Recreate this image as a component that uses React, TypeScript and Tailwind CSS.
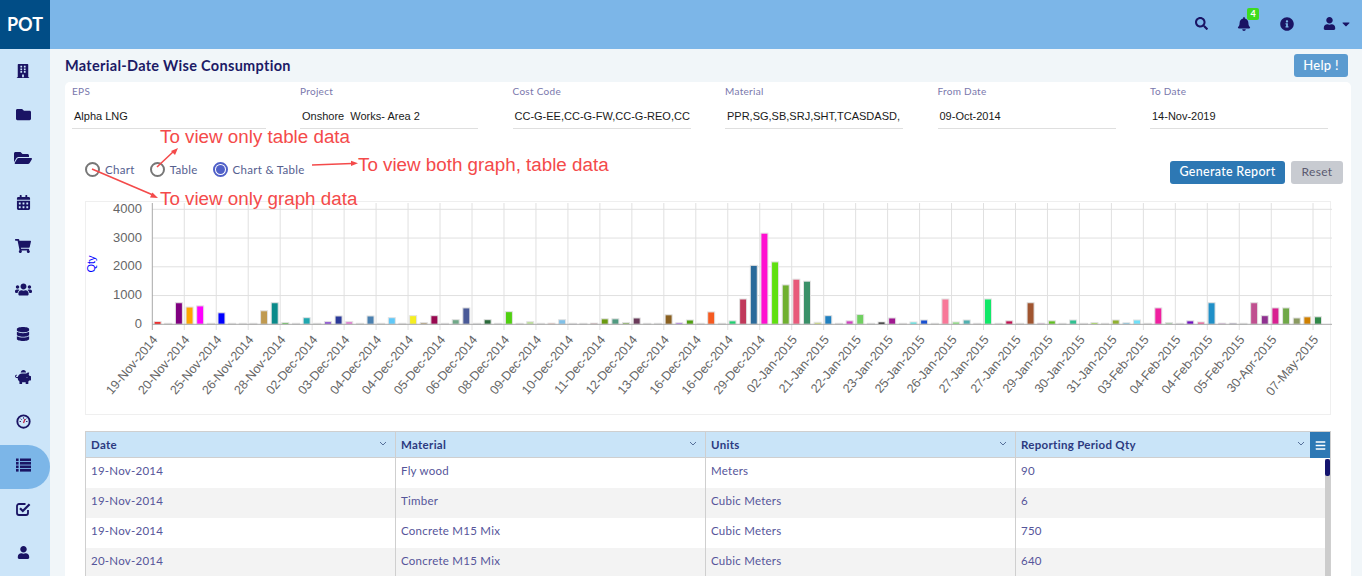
import React from 'react';
import {
  FaBuilding,
  FaFolder,
  FaFolderOpen,
  FaCalendarAlt,
  FaShoppingCart,
  FaUsers,
  FaDatabase,
  FaPiggyBank,
  FaUser,
  FaSearch,
  FaBell,
  FaInfoCircle,
  FaCaretDown,
  FaBars,
} from 'react-icons/fa';

const GaugeIcon = () => (
  <svg width="15" height="15" viewBox="0 0 16 16">
    <circle cx="8" cy="8" r="6.6" fill="none" stroke="#1a1464" strokeWidth="2" />
    <path d="M8 3.5v1.5M3.8 8h1.5M10.7 8h1.5M5 5l1 1M11 5l-1 1" stroke="#1a1464" strokeWidth="1" />
    <path d="M8 9.5L9.6 5.4" stroke="#c02040" strokeWidth="1.4" />
  </svg>
);

const ListIcon = () => (
  <svg width="15" height="14" viewBox="0 0 15 14" fill="#1a1464">
    <rect x="0" y="0.5" width="2.6" height="2.6" />
    <rect x="4" y="0.5" width="11" height="2.6" />
    <rect x="0" y="4" width="2.6" height="2.6" />
    <rect x="4" y="4" width="11" height="2.6" />
    <rect x="0" y="7.5" width="2.6" height="2.6" />
    <rect x="4" y="7.5" width="11" height="2.6" />
    <rect x="0" y="11" width="2.6" height="2.6" />
    <rect x="4" y="11" width="11" height="2.6" />
  </svg>
);

const CheckBoxIcon = () => (
  <svg width="15" height="14" viewBox="0 0 15 14" fill="none" stroke="#1a1464">
    <path d="M9.5 2H3a2 2 0 0 0-2 2v7a2 2 0 0 0 2 2h7a2 2 0 0 0 2-2V8" strokeWidth="1.8" />
    <path d="M4 6.2l2.8 2.8L13.6 2.2" strokeWidth="2.2" />
  </svg>
);

const navItems = [
  <FaBuilding size={14} />,
  <FaFolder size={15} />,
  <FaFolderOpen size={18} />,
  <FaCalendarAlt size={15} />,
  <FaShoppingCart size={16} />,
  <FaUsers size={17} />,
  <FaDatabase size={14} />,
  <FaPiggyBank size={16} />,
  <GaugeIcon />,
  <ListIcon />,
  <CheckBoxIcon />,
  <FaUser size={13} />,
];

const fields = [
  { label: 'EPS', value: 'Alpha LNG' },
  { label: 'Project', value: 'Onshore  Works- Area 2' },
  { label: 'Cost Code', value: 'CC-G-EE,CC-G-FW,CC-G-REO,CC' },
  { label: 'Material', value: 'PPR,SG,SB,SRJ,SHT,TCASDASD,' },
  { label: 'From Date', value: '09-Oct-2014' },
  { label: 'To Date', value: '14-Nov-2019' },
];

const dates = [
  '19-Nov-2014', '20-Nov-2014', '25-Nov-2014', '26-Nov-2014', '28-Nov-2014', '02-Dec-2014', '03-Dec-2014',
  '04-Dec-2014', '04-Dec-2014', '05-Dec-2014', '06-Dec-2014', '08-Dec-2014', '09-Dec-2014', '10-Dec-2014',
  '11-Dec-2014', '12-Dec-2014', '13-Dec-2014', '16-Dec-2014', '16-Dec-2014', '29-Dec-2014', '02-Jan-2015',
  '21-Jan-2015', '22-Jan-2015', '23-Jan-2015', '25-Jan-2015', '26-Jan-2015', '27-Jan-2015', '27-Jan-2015',
  '29-Jan-2015', '30-Jan-2015', '31-Jan-2015', '03-Feb-2015', '04-Feb-2015', '04-Feb-2015', '05-Feb-2015',
  '30-Apr-2015', '07-May-2015',
];

const bars: [number, string][] = [
  [90, '#f00000'], [6, '#d8d020'], [750, '#800080'], [600, '#ffa500'], [640, '#ff00ff'], [20, '#800000'],
  [400, '#0000ff'], [10, '#c8c8c8'], [10, '#c8c8c8'], [10, '#8a5a20'], [470, '#c09a50'], [750, '#0a8a8a'],
  [60, '#50c040'], [10, '#2090c0'], [230, '#20a8b0'], [10, '#50c050'], [90, '#8040d0'], [290, '#2b3a9a'],
  [90, '#e070d0'], [6, '#b0d030'], [290, '#4a80b0'], [10, '#40c0a0'], [230, '#60c8f8'], [30, '#802020'],
  [300, '#f5ee20'], [60, '#b09a70'], [300, '#980850'], [10, '#7020a0'], [160, '#70a888'], [570, '#4a5a98'],
  [10, '#102060'], [160, '#2a6a3a'], [10, '#d0d0c0'], [440, '#50d010'], [10, '#c03090'], [90, '#b8e090'],
  [10, '#d8d8d8'], [40, '#f05030'], [160, '#80c0e8'], [10, '#5030d0'], [10, '#100030'], [40, '#800010'],
  [190, '#6a9a10'], [190, '#509a80'], [60, '#80b050'], [220, '#6a3a5a'], [6, '#80a060'], [6, '#80a060'],
  [330, '#8a6020'], [50, '#8020f0'], [150, '#50a010'], [15, '#501060'], [430, '#f55a20'], [10, '#b0b0b0'],
  [120, '#20d070'], [880, '#c0385a'], [2050, '#2a6a9a'], [3170, '#ff10d0'], [2170, '#60e010'], [1370, '#70b030'],
  [1570, '#e85a7a'], [1500, '#3a9068'], [70, '#d0e070'], [300, '#2080c0'], [10, '#1060a0'], [120, '#d040c0'],
  [340, '#70d060'], [10, '#309090'], [80, '#111111'], [220, '#a01890'], [10, '#f08080'], [80, '#50e8e8'],
  [150, '#1850d0'], [6, '#70a030'], [880, '#f87898'], [80, '#80e070'], [150, '#50b0b0'], [10, '#f06080'],
  [880, '#10e868'], [10, '#d0d0d0'], [120, '#c01050'], [15, '#603020'], [750, '#a05530'], [40, '#b020b0'],
  [120, '#60c020'], [10, '#109060'], [150, '#30c090'], [10, '#000000'], [60, '#a0e040'], [6, '#a0c040'],
  [150, '#90b030'], [50, '#40b0e0'], [150, '#70e0f8'], [10, '#d0a020'], [570, '#f020a0'], [60, '#a0d0a0'],
  [10, '#2010c0'], [120, '#7010c0'], [80, '#f05090'], [750, '#2090c8'], [40, '#a010b0'], [40, '#100060'],
  [10, '#104020'], [750, '#c05090'], [300, '#903090'], [570, '#d82090'], [570, '#70a848'], [220, '#8a9a60'],
  [260, '#d08000'], [260, '#308848'],
];

const rows = [
  ['19-Nov-2014', 'Fly wood', 'Meters', '90'],
  ['19-Nov-2014', 'Timber', 'Cubic Meters', '6'],
  ['19-Nov-2014', 'Concrete M15 Mix', 'Cubic Meters', '750'],
  ['20-Nov-2014', 'Concrete M15 Mix', 'Cubic Meters', '640'],
];

const baseY = 324.3;
const gridX = (i: number) => (i === 36 ? 1312 : 151.3 + i * 31.97);

function ConsumptionChart() {
  return (
    <svg className="block w-[1246px] h-[213px]" viewBox="85 202 1246 213">
      {[0, 1000, 2000, 3000, 4000].map((v) => {
        const y = baseY - v * 0.02875;
        return (
          <g key={v}>
            {v > 0 && <line x1="151" x2="1331" y1={y} y2={y} stroke="#e0e0e0" />}
            <text x="141" y={y + 3.5} textAnchor="end" fontSize="13" fill="#666" fontFamily="Liberation Sans">
              {v}
            </text>
          </g>
        );
      })}
      {dates.map((d, i) => (
        <g key={i}>
          <line x1={gridX(i)} x2={gridX(i)} y1="203" y2="330" stroke={i === 0 ? '#a8a8a8' : '#e0e0e0'} />
          <text
            x={gridX(i) + 6}
            y="340"
            textAnchor="end"
            fontSize="12.5"
            fill="#666"
            fontFamily="Liberation Sans"
            transform={`rotate(-50 ${gridX(i) + 6} 340)`}
          >
            {d}
          </text>
        </g>
      ))}
      {bars.map(([v, color], i) => {
        const h = Math.max(v * 0.02875, 1);
        return (
          <rect
            key={i}
            x={156.6 + i * 10.646 - 3.5}
            y={baseY - h}
            width="7"
            height={h}
            fill={color}
            stroke="#e2e2e2"
            strokeWidth="1"
          />
        );
      })}
      <line x1="151" x2="1331" y1={baseY} y2={baseY} stroke="#a8a8a8" />
      <text
        x="94"
        y="264"
        textAnchor="middle"
        fontSize="11"
        fill="#0000ff"
        fontFamily="Liberation Sans"
        transform="rotate(-90 94 264)"
      >
        Qty
      </text>
    </svg>
  );
}

function Radio({ label, checked }: { label: string; checked?: boolean }) {
  return (
    <label className="flex items-center gap-[5px] text-[11.5px] tracking-[0.3px] text-[#55608f]">
      <span
        className={
          checked
            ? 'w-[15px] h-[15px] rounded-full border-2 border-[#5060c8] flex items-center justify-center'
            : 'w-[15px] h-[15px] rounded-full border-2 border-[#777777] flex items-center justify-center'
        }
      >
        {checked && <span className="w-[9px] h-[9px] rounded-full bg-[#5060c8]" />}
      </span>
      {label}
    </label>
  );
}

export default function App() {
  return (
    <div className="relative h-[576px] w-[1362px] overflow-hidden flex flex-col font-[Lato,sans-serif] bg-[#f1f6f9]">
      <header className="h-[49px] shrink-0 flex items-center bg-[#7cb6e8]">
        <div className="w-[50px] h-full bg-[#014d86] flex items-center justify-center text-white text-[18px] font-bold">
          POT
        </div>
        <div className="ml-auto pb-[2px] flex items-center text-[#1a1464]">
          <FaSearch size={13} className="mr-[29px]" />
          <span className="relative mr-[29px]">
            <FaBell size={14} />
            <span className="absolute -top-[9px] left-[10px] w-[12px] h-[12px] rounded-[2px] bg-[#3ddc1e] text-white text-[9px] font-bold flex items-center justify-center">
              4
            </span>
          </span>
          <FaInfoCircle size={14} className="mr-[29px]" />
          <FaUser size={13} className="mr-[4px]" />
          <FaCaretDown size={12} className="mr-[10px]" />
        </div>
      </header>

      <div className="flex flex-1 min-h-0">
        <nav className="w-[50px] shrink-0 bg-[#cce5f9] text-[#1a1464]">
          {navItems.map((icon, i) => (
            <div key={i} className="relative h-[43.8px] pr-[4px] flex items-center justify-center">
              {i === 9 && <span className="absolute left-0 top-[2px] w-[50px] h-[44px] bg-[#7cb6e8] rounded-r-[22px]" />}
              <span className="relative">{icon}</span>
            </div>
          ))}
        </nav>

        <main className="flex-1 min-w-0 pl-[15px] pr-[11px]">
          <div className="h-[33px] flex items-center justify-between">
            <h1 className="text-[14.5px] font-bold tracking-[0.3px] text-[#1c1a66]">Material-Date Wise Consumption</h1>
            <button className="w-[54px] h-[23px] mr-[3px] rounded-[3px] bg-[#5b9bd0] text-white text-[13px] font-medium tracking-[0.3px]">
              Help !
            </button>
          </div>

          <section className="h-[600px] rounded-t-[5px] bg-white pl-[7px] pt-[3px]">
            <div className="grid grid-cols-[228px_212.5px_212.5px_212.5px_212.5px_180px]">
              {fields.map((f, i) => (
                <div key={f.label} className={i === 0 ? 'w-[194px]' : 'w-[178px]'}>
                  <div className="h-[13px] text-[10px] leading-[13px] tracking-[0.3px] text-[#7a78ac]">{f.label}</div>
                  <div className="mt-[6px] h-[25px] pl-[2px] border-b border-[#dfdfdf] overflow-hidden whitespace-pre text-[11px] leading-[24px] text-[#1a1a1a] font-['Liberation_Sans',sans-serif]">
                    {f.value}
                  </div>
                </div>
              ))}
            </div>

            <div className="mt-[30px] pl-[13px] pr-[8px] h-[26px] flex items-center">
              <div className="flex items-center gap-[15px] mt-[-5px]">
                <Radio label="Chart" />
                <Radio label="Table" />
                <Radio label="Chart & Table" checked />
              </div>
              <button className="ml-auto w-[115px] h-[23px] rounded-[3px] bg-[#2d78b4] text-white text-[12.5px] font-medium tracking-[0.3px]">
                Generate Report
              </button>
              <button className="ml-[6px] w-[52px] h-[23px] rounded-[3px] bg-[#c8cbd1] text-[#5a5a70] text-[12px] tracking-[0.3px]">
                Reset
              </button>
            </div>

            <div className="ml-[13px] mt-[16px] w-[1246px] h-[214px] border border-[#efefef] box-border">
              <ConsumptionChart />
            </div>

            <div className="ml-[13px] mt-[16px] w-[1246px] border border-[#cfcfcf] box-border relative">
              <div className="h-[26px] grid grid-cols-[310px_310px_310px_1fr] bg-[#c9e4f8] border-b border-[#cfcfcf] text-[11.5px] font-bold tracking-[0.3px] text-[#2c3a80]">
                {['Date', 'Material', 'Units', 'Reporting Period Qty'].map((h, i) => (
                  <div
                    key={h}
                    className={
                      i < 3
                        ? 'relative flex items-center pl-[5px] border-r border-[#cfcfcf]'
                        : 'relative flex items-center pl-[5px]'
                    }
                  >
                    {h}
                    <svg
                      width="8"
                      height="5"
                      viewBox="0 0 8 5"
                      className={i === 3 ? 'absolute right-[25px] top-[9px]' : 'absolute right-[8px] top-[9px]'}
                    >
                      <path d="M1 1l3 3 3-3" fill="none" stroke="#56709a" strokeWidth="1" />
                    </svg>
                  </div>
                ))}
              </div>
              <div className="absolute right-0 top-0 w-[20px] h-[26px] bg-[#2d78b4] flex items-center justify-center text-white">
                <FaBars size={11} />
              </div>
              {rows.map((r, i) => (
                <div
                  key={i}
                  className={
                    i % 2 === 0
                      ? 'h-[30px] grid grid-cols-[310px_310px_310px_1fr] bg-white text-[11.5px] tracking-[0.25px] text-[#55559a]'
                      : 'h-[30px] grid grid-cols-[310px_310px_310px_1fr] bg-[#f3f3f3] text-[11.5px] tracking-[0.25px] text-[#55559a]'
                  }
                >
                  {r.map((c, j) => (
                    <div
                      key={j}
                      className={
                        j < 3 ? 'pl-[5px] pt-[4px] border-r border-[#cfcfcf]' : 'pl-[5px] pt-[4px]'
                      }
                    >
                      {c}
                    </div>
                  ))}
                </div>
              ))}
              <div className="absolute right-0 top-[27px] bottom-0 w-[5px] bg-[#cccccc]">
                <div className="w-[5px] h-[17px] rounded-[2px] bg-[#14146e]" />
              </div>
            </div>
          </section>
        </main>
      </div>

      {/* red notes drawn on top of the screen */}
      <svg className="absolute left-0 top-0 w-[1362px] h-[576px] pointer-events-none" viewBox="0 0 1362 576">
        <g stroke="#f44a4a" strokeWidth="1.6" fill="#f44a4a">
          <line x1="92" y1="169" x2="153" y2="195" />
          <path d="M158 198l-8-0.5 2.4-5z" stroke="none" />
          <line x1="157" y1="167" x2="174" y2="151" />
          <path d="M178 148l-3 7-4-4z" stroke="none" />
          <line x1="312" y1="165" x2="352" y2="163.5" />
          <path d="M358 163.3l-7 2.8v-5.4z" stroke="none" />
        </g>
      </svg>
      <div className="absolute left-[160px] top-[126px] text-[18.8px] leading-[21px] text-[#f44a4a] font-['Liberation_Sans',sans-serif] whitespace-nowrap">
        To view only table data
      </div>
      <div className="absolute left-[358px] top-[154px] text-[18.8px] leading-[21px] text-[#f44a4a] font-['Liberation_Sans',sans-serif] whitespace-nowrap">
        To view both graph, table data
      </div>
      <div className="absolute left-[160px] top-[188px] text-[18.8px] leading-[21px] text-[#f44a4a] font-['Liberation_Sans',sans-serif] whitespace-nowrap">
        To view only graph data
      </div>
    </div>
  );
}
